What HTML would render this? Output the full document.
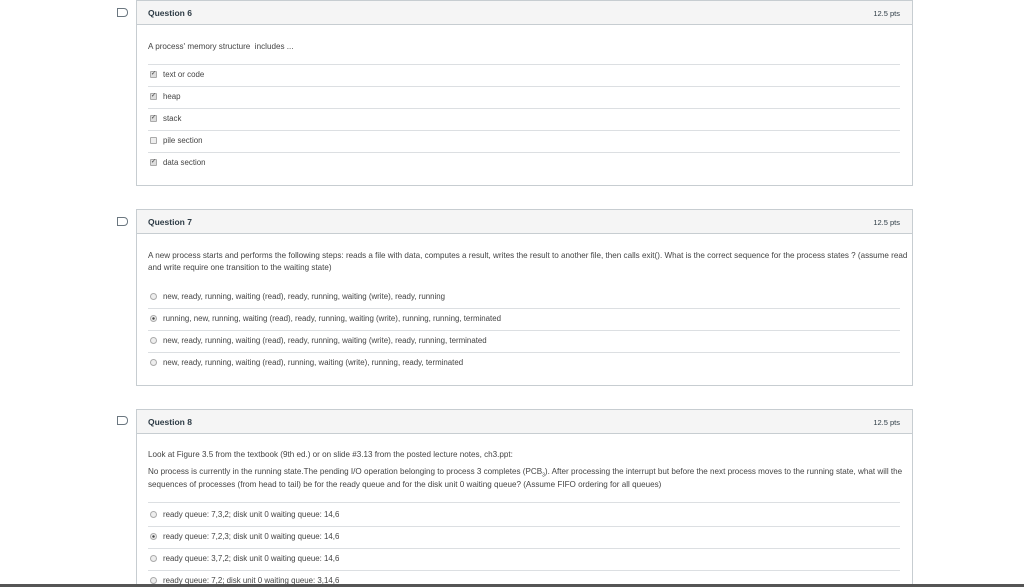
<!DOCTYPE html>
<html><head><style>
*{margin:0;padding:0;box-sizing:border-box}
html,body{width:1024px;height:587px;overflow:hidden}
body{background:#fff;font-family:"Liberation Sans",sans-serif;color:#2d3b45;position:relative;font-size:7px}
.card{position:absolute;left:136px;width:777px;border:1px solid #c7cdd1;background:#fff}
.hd{height:24px;background:#f5f5f5;border-bottom:1px solid #c7cdd1;position:relative}
.hd b{position:absolute;left:11px;top:7px;font-size:8.5px;font-weight:bold;color:#2d3b45}
.hd span{position:absolute;right:12px;top:8px;font-size:7.5px}
.t{position:absolute;left:11px;font-size:8.1px;color:#444;white-space:nowrap}
.sep{position:absolute;left:11px;right:12px;border-top:1px solid #dcdfe2}
.o{position:absolute;left:13px;font-size:7.9px;color:#444;white-space:nowrap;display:flex;align-items:center;height:10px}
.o i{display:inline-block;width:7px;height:7px;border:1px solid #aaa;background:#eee;margin-right:6px;border-radius:1px;font-style:normal;font-size:6px;line-height:5px;text-align:center;color:#333}
.o i.r{border-radius:50%}
.o i.c{background:#ddd}
.o i.d{background:radial-gradient(#444 30%,#eee 40%)}
.bm{position:absolute;left:117px;width:11px;height:9px;border:1px solid #6b7780;border-radius:0 4px 4px 0}
</style></head><body>
<div class="bm" style="top:8px"></div>
<div class="bm" style="top:217px"></div>
<div class="bm" style="top:416px"></div>

<div class="card" style="top:0;height:186px">
<div class="hd"><b>Question 6</b><span>12.5 pts</span></div>
<div class="t" style="top:41px">A process' memory structure &nbsp;includes ...</div>
<div class="sep" style="top:63px"></div>
<div class="o" style="top:68px"><i class="c">&#10003;</i>text or code</div>
<div class="sep" style="top:85px"></div>
<div class="o" style="top:90px"><i class="c">&#10003;</i>heap</div>
<div class="sep" style="top:107px"></div>
<div class="o" style="top:112px"><i class="c">&#10003;</i>stack</div>
<div class="sep" style="top:129px"></div>
<div class="o" style="top:134px"><i></i>pile section</div>
<div class="sep" style="top:151px"></div>
<div class="o" style="top:156px"><i class="c">&#10003;</i>data section</div>
</div>

<div class="card" style="top:209px;height:177px">
<div class="hd"><b>Question 7</b><span>12.5 pts</span></div>
<div class="t" style="top:41px">A new process starts and performs the following steps: reads a file with data, computes a result, writes the result to another file, then calls exit(). What is the correct sequence for the process states ? (assume read</div>
<div class="t" style="top:53px">and write require one transition to the waiting state)</div>
<div class="o" style="top:81px"><i class="r"></i>new, ready, running, waiting (read), ready, running, waiting (write), ready, running</div>
<div class="sep" style="top:98px"></div>
<div class="o" style="top:103px"><i class="r d"></i>running, new, running, waiting (read), ready, running, waiting (write), running, running, terminated</div>
<div class="sep" style="top:120px"></div>
<div class="o" style="top:125px"><i class="r"></i>new, ready, running, waiting (read), ready, running, waiting (write), ready, running, terminated</div>
<div class="sep" style="top:142px"></div>
<div class="o" style="top:147px"><i class="r"></i>new, ready, running, waiting (read), running, waiting (write), running, ready, terminated</div>
</div>

<div class="card" style="top:409px;height:190px">
<div class="hd"><b>Question 8</b><span>12.5 pts</span></div>
<div class="t" style="top:40px">Look at Figure 3.5 from the textbook (9th ed.) or on slide #3.13 from the posted lecture notes, ch3.ppt:</div>
<div class="t" style="top:57px">No process is currently in the running state.The pending I/O operation belonging to process 3 completes (PCB<sub style="font-size:5px">3</sub>). After processing the interrupt but before the next process moves to the running state, what will the</div>
<div class="t" style="top:70px">sequences of processes (from head to tail) be for the ready queue and for the disk unit 0 waiting queue? (Assume FIFO ordering for all queues)</div>
<div class="sep" style="top:92px"></div>
<div class="o" style="top:99px"><i class="r"></i>ready queue: 7,3,2; disk unit 0 waiting queue: 14,6</div>
<div class="sep" style="top:116px"></div>
<div class="o" style="top:121px"><i class="r d"></i>ready queue: 7,2,3; disk unit 0 waiting queue: 14,6</div>
<div class="sep" style="top:138px"></div>
<div class="o" style="top:143px"><i class="r"></i>ready queue: 3,7,2; disk unit 0 waiting queue: 14,6</div>
<div class="sep" style="top:160px"></div>
<div class="o" style="top:165px"><i class="r"></i>ready queue: 7,2; disk unit 0 waiting queue: 3,14,6</div>
</div>
<div style="position:absolute;left:0;top:584px;width:1024px;height:3px;background:#555"></div>
</body></html>
